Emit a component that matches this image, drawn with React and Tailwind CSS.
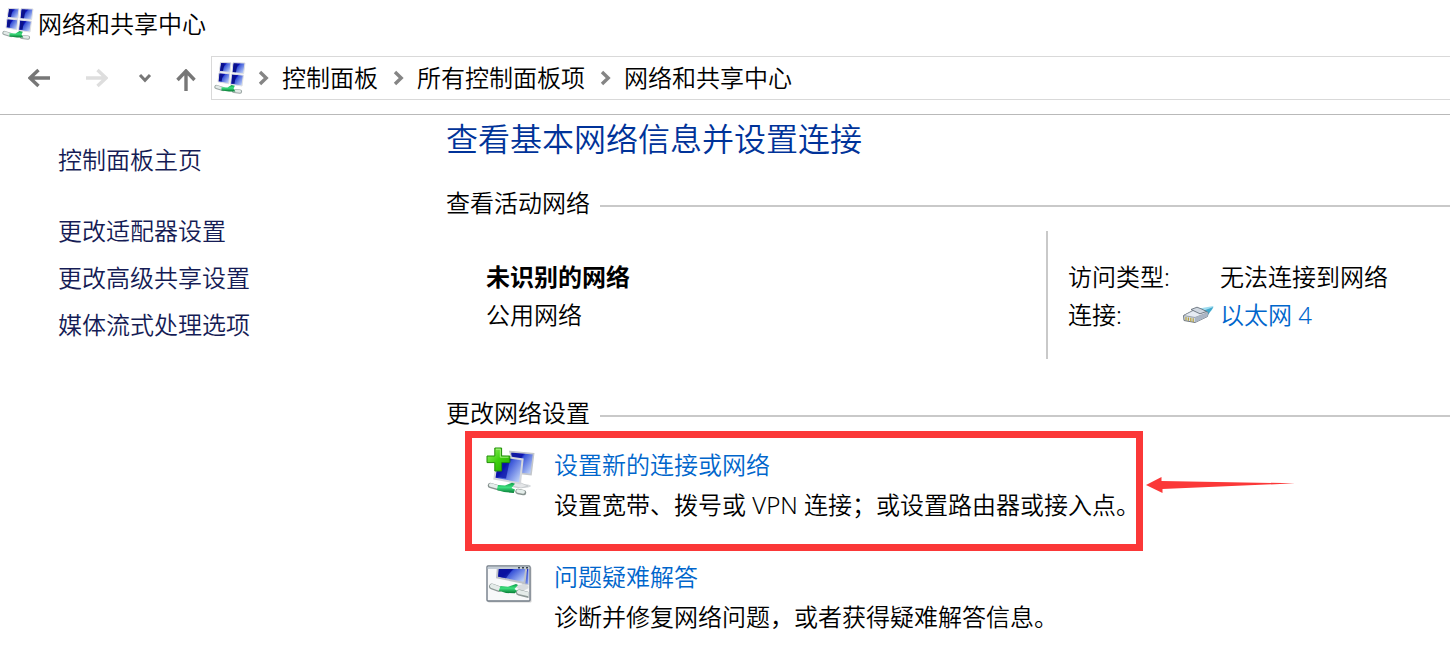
import { useId } from "react";

const breadcrumbs = ["控制面板", "所有控制面板项", "网络和共享中心"];

const sidebarLinks = ["更改适配器设置", "更改高级共享设置", "媒体流式处理选项"];

const ScreenGradient = ({ id }) => (
  <linearGradient id={id} x1="0" y1="0" x2="1" y2="0.7">
    <stop offset="0" stopColor="#1019a0" />
    <stop offset="0.42" stopColor="#0a10b4" />
    <stop offset="0.5" stopColor="#3a55d8" />
    <stop offset="1" stopColor="#b9cdf8" />
  </linearGradient>
);

const CableGradient = ({ id }) => (
  <linearGradient id={id} x1="0" y1="0" x2="0" y2="1">
    <stop offset="0" stopColor="#0a9a46" />
    <stop offset="0.45" stopColor="#3ee07e" />
    <stop offset="1" stopColor="#067a34" />
  </linearGradient>
);

const NetworkIcon = () => {
  const id = useId();
  return (
    <svg viewBox="0 2 32 32" className="size-8 shrink-0" aria-hidden="true">
      <defs>
        <ScreenGradient id={`${id}s`} />
        <CableGradient id={`${id}c`} />
      </defs>
      <g fill={`url(#${id}s)`} stroke="#dfe0e2" strokeWidth="1">
        <path d="M6.5 2.5 17 2.8 16 12.4 5.4 11.4z" />
        <path d="M19 2.8 31 3 29.6 13.6 18 12.6z" />
        <path d="M5 12.8 15.8 13.8 14.8 23.7 4 21.8z" />
        <path d="M17.6 14 29.4 15.2 28 26 16.6 24.2z" />
      </g>
      <path d="M7.3 3.3 10.4 3.5 9 11 6.4 10.7zM20 3.6 23.4 3.8 22 12.2 19 12zM5.8 13.9 8.8 14.2 7.6 21.4 5.2 21zM18.6 15 21.8 15.4 20.5 23.8 17.8 23.4z" fill="#0b128a" />
      <path d="M2.4 27 9 29M20 31 26 31.6" stroke="#9aa5a3" strokeWidth="4.2" strokeLinecap="round" />
      <path d="M2.6 26.8 9 28.8M20 30.8 25.8 31.4" stroke="#e2e9e7" strokeWidth="2.6" strokeLinecap="round" />
      <path d="M7.5 27.3 13.5 27.6 17.5 25 20.8 25.8 19.6 28.8 21.4 31.4 15 31.4 7.4 30.4z" fill={`url(#${id}c)`} />
    </svg>
  );
};

const NewConnectionIcon = () => {
  const id = useId();
  return (
    <svg viewBox="0 0 50 50" className="size-[50px]" aria-hidden="true">
      <defs>
        <ScreenGradient id={`${id}s`} />
        <CableGradient id={`${id}c`} />
        <linearGradient id={`${id}p`} x1="0" y1="0" x2="1" y2="1">
          <stop offset="0" stopColor="#9cf36c" />
          <stop offset="0.5" stopColor="#3ed10e" />
          <stop offset="1" stopColor="#25a400" />
        </linearGradient>
      </defs>
      <ellipse cx="35" cy="39" rx="10" ry="2" fill="#d7dadd" />
      <path d="M24 4.6 47.6 6.8 45 27.6 30 26z" fill={`url(#${id}s)`} stroke="#c3c6cb" strokeWidth="1.6" />
      <path d="M25 6.6 36 7.6 34 24 28 23z" fill="#16209e" opacity="0.6" />
      <path d="M28 35 35 36 42 39 35 41 26 39z" fill="#e4e6e8" stroke="#b9bdc1" strokeWidth="0.6" />
      <path d="M12 8.8 36.6 12.4 34 36.4 8.4 31.6z" fill={`url(#${id}s)`} stroke="#d5d7dc" strokeWidth="2" />
      <path d="M13.5 11 24 12.5 20 31.6 10 29.8z" fill="#0b14a5" opacity="0.75" />
      <path d="M4.5 38.5 13 41M32 44.5 37.5 45.6" stroke="#87928f" strokeWidth="5.4" strokeLinecap="round" />
      <path d="M4.7 38 13 40.4M32 44 37.2 45" stroke="#e5eeeb" strokeWidth="3.4" strokeLinecap="round" />
      <path d="M12 38 19 38.6 26 35.7 29 36.8 25.5 41 29 42.5 27.8 46 18 45 10.8 43z" fill={`url(#${id}c)`} />
      <path d="M8.8 1h6.8v8h8.2v6.6h-8.2V24H8.8v-8.4H1V9h7.8z" fill={`url(#${id}p)`} stroke="#218e08" strokeWidth="1" />
      <path d="M10 2.2h4.3v8h8.2" fill="none" stroke="#bdf89d" strokeWidth="0.8" />
    </svg>
  );
};

const TroubleshootIcon = () => {
  const id = useId();
  return (
    <svg viewBox="0 0 46 38" className="h-[38px] w-[46px]" aria-hidden="true">
      <defs>
        <ScreenGradient id={`${id}s`} />
        <CableGradient id={`${id}c`} />
        <clipPath id={`${id}k`}>
          <path d="M2.5 4h40v30h-40z" />
        </clipPath>
      </defs>
      <rect x="2" y="2" width="43.5" height="35.5" rx="1" fill="#d4d4d4" />
      <rect x="1" y="1" width="43" height="35" rx="1" fill="#f8f9fa" stroke="#737d88" strokeWidth="1.4" />
      <path d="M1.7 1.7h41.6v2.4H1.7z" fill="#c4cdd6" />
      <path d="M32 2.7h2M36 2.7h2M40 2.7h2" stroke="#38434e" strokeWidth="1.4" />
      <g clipPath={`url(#${id}k)`}>
        <path d="M36 0 47 1 45 20 37 19z" fill={`url(#${id}s)`} stroke="#c7c9ce" strokeWidth="1.5" />
        <path d="M12 1 40.5 1 38.5 18 11 12.5z" fill={`url(#${id}s)`} stroke="#bfc2c8" strokeWidth="2" />
        <path d="M13 3.8 27 3.8 20 13.2 12.3 11.5z" fill="#0a1299" opacity="0.75" />
        <path d="M27 21 38 19 45 22 37 26z" fill="#d9dcdf" />
        <path d="M6 21.5 13 24M33 27.5 43 30" stroke="#8e9997" strokeWidth="6" strokeLinecap="round" />
        <path d="M6 21 13 23.5M33 27 43 29.4" stroke="#e4ebe9" strokeWidth="4" strokeLinecap="round" />
        <path d="M14.5 21 22 21.8 30 19 32 20 28.5 24 31 25.8 29 28.3 20 28 12.8 25.8z" fill={`url(#${id}c)`} />
      </g>
    </svg>
  );
};

const EthernetIcon = () => (
  <svg viewBox="0 0 32 22" className="h-[22px] w-8" aria-hidden="true">
    <path d="M17 4.5 31.5 2 30 6 25.5 9.5z" fill="#9fdcef" />
    <path d="M22 6.5 31.5 3 26 11z" fill="#3fa7cc" />
    <path d="M1.5 11.5 14 5 26 8.5 25.5 12.5 13 18.5 2 16.5z" fill="#d3dae5" stroke="#707981" strokeWidth="1" />
    <path d="M1.5 11.5 13 13.5 26 8.5 14 5z" fill="#e6ebf2" stroke="#89929a" strokeWidth="0.8" />
    <path d="M13 13.5v5l12.5-6 .5-4z" fill="#aab5c4" />
    <path d="M9 5.5 15 3.2 20 5.2 24.5 7.5 18 9.8z" fill="#d0d7e0" stroke="#68727d" strokeWidth="0.9" />
    <path d="M4 13v3.2M6.4 13.4v3.4M8.8 13.8v3.6M11.2 14.2v3.8" stroke="#b8a23a" strokeWidth="1.2" />
  </svg>
);

const Crumb = ({ label }) => (
  <li className="flex items-center">
    <svg viewBox="0 0 12 16" className="mx-3 h-4 w-3" fill="none" stroke="#858585" strokeWidth="3.4" aria-hidden="true">
      <path d="M2 2 8.2 8 2 14" />
    </svg>
    <a href="#">{label}</a>
  </li>
);

const SectionTitle = ({ children }) => (
  <div className="flex items-center gap-2.5">
    <h2 className="leading-8">{children}</h2>
    <span className="mt-1.5 h-0.5 flex-1 bg-[#c9c9c9]" />
  </div>
);

const Task = ({ icon, title, description }) => (
  <div className="flex">
    <div className="w-[70px] shrink-0 pl-0.5">{icon}</div>
    <div className="leading-10 whitespace-nowrap">
      <a href="#" className="block text-[#0066cc]">{title}</a>
      <p>{description}</p>
    </div>
  </div>
);

const App = () => (
  <div className="min-h-screen overflow-hidden bg-white font-['Noto_Sans','Noto_Sans_CJK_SC',sans-serif] text-2xl font-[350] text-black">
    <header className="border-b border-[#b9b9b9] pb-3.5">
      <div className="flex h-12 items-center gap-1 pl-0.5">
        <NetworkIcon />
        <h1 className="leading-8">网络和共享中心</h1>
      </div>
      <div className="flex items-center pt-2">
        <div className="flex w-[211px] shrink-0 items-center pl-7">
          <button type="button" aria-label="后退" className="mr-9">
            <svg viewBox="0 0 22 20" className="h-5 w-[22px]" fill="none" stroke="#777" strokeWidth="3.4">
              <path d="M22 10H2M10.5 2 2 10l8.5 8" />
            </svg>
          </button>
          <button type="button" aria-label="前进" disabled className="mr-[30px]">
            <svg viewBox="0 0 22 20" className="h-5 w-[22px]" fill="none" stroke="#dedede" strokeWidth="3.4">
              <path d="M0 10h20M11.5 2 20 10l-8.5 8" />
            </svg>
          </button>
          <button type="button" aria-label="最近浏览的位置" className="mr-6">
            <svg viewBox="0 0 14 10" className="h-2.5 w-3.5" fill="none" stroke="#777" strokeWidth="3">
              <path d="M2 2 7 7.3 12 2" />
            </svg>
          </button>
          <button type="button" aria-label="向上" className="pt-1">
            <svg viewBox="0 0 20 22" className="h-[22px] w-5" fill="none" stroke="#777" strokeWidth="3.4">
              <path d="M10 22V2M1.5 11 10 2l8.5 9" />
            </svg>
          </button>
        </div>
        <nav aria-label="地址" className="flex h-11 flex-1 items-center border border-r-0 border-[#d9d9d9] pl-0.5">
          <NetworkIcon />
          <ol className="flex gap-[3px] whitespace-nowrap leading-8">
            {breadcrumbs.map((label) => (
              <Crumb key={label} label={label} />
            ))}
          </ol>
        </nav>
      </div>
    </header>

    <div className="flex">
      <aside className="w-[446px] shrink-0 pt-[21px] pl-[58px] text-[#151c55]">
        <a href="#" className="block leading-[47px]">控制面板主页</a>
        <ul className="mt-6">
          {sidebarLinks.map((label) => (
            <li key={label} className="leading-[47px]">
              <a href="#">{label}</a>
            </li>
          ))}
        </ul>
      </aside>

      <main className="min-w-0 flex-1 pt-1">
        <p className="text-[32px] leading-10 text-[#003399]">查看基本网络信息并设置连接</p>

        <section className="mt-7">
          <SectionTitle>查看活动网络</SectionTitle>
          <div className="mt-3 flex leading-[38px] whitespace-nowrap">
            <div className="w-[600px] shrink-0 pt-[27px] pb-[25px] pl-10">
              <p className="font-bold">未识别的网络</p>
              <p>公用网络</p>
            </div>
            <dl className="grid grid-cols-[114px_auto] content-start border-l-2 border-[#c9c9c9] pt-[27px] pl-5">
              <dt>访问类型:</dt>
              <dd className="pl-[38px]">无法连接到网络</dd>
              <dt>连接:</dt>
              <dd>
                <a href="#" className="flex items-center gap-1.5 text-[#0066cc]">
                  <EthernetIcon />
                  以太网 4
                </a>
              </dd>
            </dl>
          </div>
        </section>

        <section className="mt-[38px]">
          <SectionTitle>更改网络设置</SectionTitle>
          <div className="relative mt-0.5 ml-[19px] w-[678px] border-[7px] border-[#fb3838] pt-[7px] pb-[19px] pl-3">
            <Task
              icon={
                <div className="pt-0.5">
                  <NewConnectionIcon />
                </div>
              }
              title="设置新的连接或网络"
              description="设置宽带、拨号或 VPN 连接；或设置路由器或接入点。"
            />
            <svg viewBox="0 0 150 16" className="absolute top-[39px] left-full ml-2.5 h-4 w-[150px]" fill="#fb3838" aria-hidden="true">
              <path d="M0 8 15.5 0V4L149 6.3 16.5 12V16z" />
            </svg>
          </div>
          <div className="mt-1.5 ml-[38px]">
            <Task
              icon={
                <div className="pt-2">
                  <TroubleshootIcon />
                </div>
              }
              title="问题疑难解答"
              description="诊断并修复网络问题，或者获得疑难解答信息。"
            />
          </div>
        </section>
      </main>
    </div>
  </div>
);

export default App;
